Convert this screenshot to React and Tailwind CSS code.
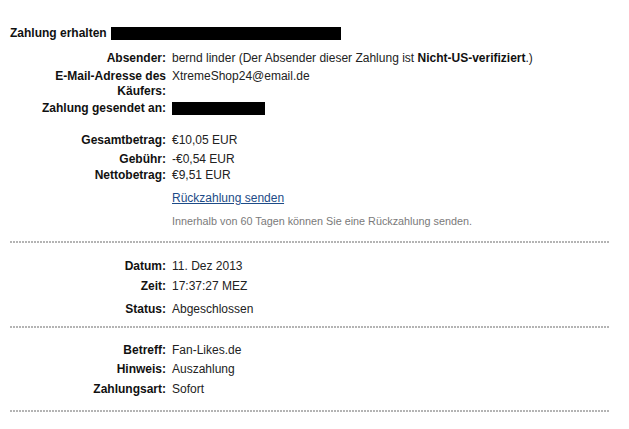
import React from 'react';

const rows = {
  dotted: 'h-[2px] w-[600px] bg-[repeating-linear-gradient(to_right,#b4b4b4_0_2px,transparent_2px_3px)]',
};

function Row({ label, children, className = '' }) {
  return (
    <div className={`flex leading-[16px] ${className}`}>
      <div className="w-[156px] shrink-0 text-right font-bold text-[#111]">{label}</div>
      <div className="pl-[6px] text-[#222]">{children}</div>
    </div>
  );
}

export default function App() {
  return (
    <div className="w-[629px] h-[429px] bg-white pl-[10px] text-[12px] font-['Liberation_Sans',Arial,sans-serif] overflow-hidden">
      {/* header */}
      <div className="pt-[25px] flex items-center leading-[16px]">
        <span className="font-bold text-[#111]">Zahlung erhalten</span>
        <span className="ml-[4px] inline-block w-[230px] h-[13px] bg-black"></span>
      </div>

      <Row label="Absender:" className="mt-[9px]">
        bernd linder (Der Absender dieser Zahlung ist <b className="text-[#111]">Nicht-US-verifiziert</b>.)
      </Row>
      <div className="flex leading-[15px] mt-[3px]">
        <div className="w-[156px] shrink-0 text-right font-bold text-[#111] whitespace-nowrap">
          E-Mail-Adresse des<br />Käufers:
        </div>
        <div className="pl-[6px] text-[#222]">XtremeShop24@email.de</div>
      </div>
      <Row label="Zahlung gesendet an:" className="mt-[1px]">
        <span className="mt-[2px] inline-block w-[93px] h-[13px] bg-black align-top"></span>
      </Row>

      <Row label="Gesamtbetrag:" className="mt-[16px]">€10,05 EUR</Row>
      <Row label="Gebühr:" className="mt-[3px]">-€0,54 EUR</Row>
      <Row label="Nettobetrag:">€9,51 EUR</Row>
      <Row label="" className="mt-[7px]">
        <a href="#" className="text-[#1d4b87] underline">Rückzahlung senden</a>
      </Row>
      <Row label="" className="mt-[7px]">
        <span className="text-[10.8px] text-[#7a7a7a]">Innerhalb von 60 Tagen können Sie eine Rückzahlung senden.</span>
      </Row>
      <div className={`${rows.dotted} mt-[12px]`}></div>

      <Row label="Datum:" className="mt-[15px]">11. Dez 2013</Row>
      <Row label="Zeit:" className="mt-[4px]">17:37:27 MEZ</Row>
      <Row label="Status:" className="mt-[7px]">Abgeschlossen</Row>
      <div className={`${rows.dotted} mt-[9px]`}></div>

      <Row label="Betreff:" className="mt-[14px]">Fan-Likes.de</Row>
      <Row label="Hinweis:" className="mt-[3px]">Auszahlung</Row>
      <Row label="Zahlungsart:" className="mt-[4px]">Sofort</Row>
      <div className={`${rows.dotted} mt-[13px]`}></div>
    </div>
  );
}
